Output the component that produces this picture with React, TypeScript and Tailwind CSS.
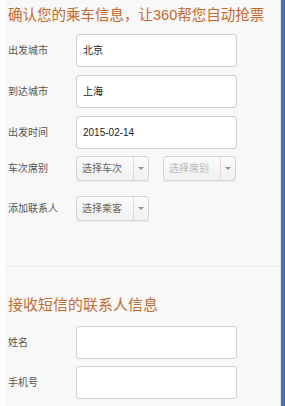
const cjk = "font-['Liberation_Sans','Noto_Sans_CJK_SC',sans-serif]";

function TextRow({ label, value, className = "" }: { label: string; value?: string; className?: string }) {
  return (
    <div className={`flex items-center ${className}`}>
      <span className="w-[68px] shrink-0 text-[10px] text-[#555]">{label}</span>
      <div className="h-[33px] w-[161px] rounded-[3px] border border-[#c9ced8] bg-white px-[6px] flex items-center text-[10px] text-[#222]">
        {value}
      </div>
    </div>
  );
}

function Select({ text, disabled = false }: { text: string; disabled?: boolean }) {
  return (
    <div className="h-[25px] w-[73px] flex rounded-[3px] border border-[#ddd2d0] bg-gradient-to-b from-[#fbfbfb] to-[#f0f0f0] shadow-[0_1px_1px_rgba(0,0,0,0.06)]">
      <span className={`flex-1 flex items-center pl-[5px] text-[10px] ${disabled ? "text-[#bbb]" : "text-[#666]"}`}>
        {text}
      </span>
      <span className="w-[15px] border-l border-[#e2d9d7] flex items-center justify-center">
        <span className="block w-0 h-0 border-l-[3px] border-r-[3px] border-t-[3px] border-l-transparent border-r-transparent border-t-[#a08c88]" />
      </span>
    </div>
  );
}

export default function App() {
  return (
    <div className={`w-[285px] h-[406px] flex overflow-hidden ${cjk}`}>
      <div className="w-[5px] bg-[#fdfdfd]" />
      <div className="flex-1 bg-[#f8f8f8] border-r border-[#e4e4e4] pl-[3px] flex flex-col">
        <h1 className="h-[30px] leading-[30px] text-[14.5px] text-[#c4692d] whitespace-nowrap">
          确认您的乘车信息，让360帮您自动抢票
        </h1>
        <TextRow label="出发城市" value="北京" className="mt-[4px]" />
        <TextRow label="到达城市" value="上海" className="mt-[8px]" />
        <TextRow label="出发时间" value="2015-02-14" className="mt-[8px]" />
        <div className="flex items-center mt-[7px]">
          <span className="w-[68px] shrink-0 text-[10px] text-[#555]">车次席别</span>
          <Select text="选择车次" />
          <div className="w-[14px]" />
          <Select text="选择席别" disabled />
        </div>
        <div className="flex items-center mt-[15px]">
          <span className="w-[68px] shrink-0 text-[10px] text-[#555]">添加联系人</span>
          <Select text="选择乘客" />
        </div>
        <div className="mt-[45px] -ml-[3px] border-t border-[#ebebeb]" />
        <h2 className="mt-[28px] h-[20px] leading-[20px] text-[15px] text-[#bf6e35]">接收短信的联系人信息</h2>
        <TextRow label="姓名" className="mt-[11px]" />
        <TextRow label="手机号" className="mt-[7px]" />
      </div>
      <div className="w-[4px] bg-[#3674cf]" />
    </div>
  );
}
